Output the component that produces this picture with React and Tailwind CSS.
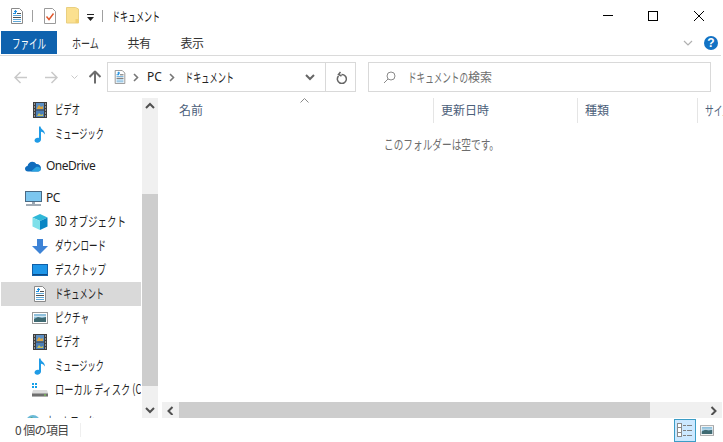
const FONT = '"Noto Sans CJK JP", "Noto Sans", sans-serif';

/* Condensed kana: the string is squeezed to the given width, computed from its natural width */
function Squeeze({ text, width, natural, className = '' }) {
  const nat = (natural || text.length * 12) * (13 / 12);
  return (
    <span className={`inline-block shrink-0 whitespace-nowrap text-[13px] ${className}`} style={{ width }}>
      <span className="inline-block origin-left" style={{ transform: `scaleX(${width / nat})` }}>{text}</span>
    </span>
  );
}

function DocIcon({ size = 16 }) {
  return (
    <svg width={size} height={size} viewBox="0 0 16 16" className="shrink-0">
      <path d="M2.500 .500h8l3 3v12h-11z" fill="#fff" stroke="#8a8a8a" />
      <path d="M6.500 2v3M5 3.500h3M4 5.500h3" stroke="#1f8fe0" strokeWidth="1.200" />
      <path d="M4 7.500h8M4 11.500h8M4 13.500h8" stroke="#5fa8d8" />
      <path d="M8 5.500h4M4 9.500h8" stroke="#4f4f4f" />
    </svg>
  );
}
function ChecklistIcon() {
  return (
    <svg width="14" height="16" viewBox="0 0 14 16" className="shrink-0">
      <path d="M1.500 .500h8l3 3v12h-11z" fill="#fff" stroke="#9a9a9a" />
      <path d="M3.500 8.500l2.500 3 4.500-6" fill="none" stroke="#e0562b" strokeWidth="1.400" />
    </svg>
  );
}
function FolderIcon() {
  return (
    <svg width="13" height="17" viewBox="0 0 13 17" className="shrink-0">
      <path d="M.500 .500h9l3 1.500v14h-12z" fill="#fbe08f" stroke="#e9cf80" />
      <path d="M9.500 12h3v4h-3z" fill="#f1cf70" />
    </svg>
  );
}
function VideoIcon() {
  return (
    <svg width="14" height="16" viewBox="0 0 14 16" className="shrink-0">
      <rect width="14" height="16" fill="#3e3e3e" />
      <rect x="3" y="1" width="8" height="6.500" fill="#5b8fc4" />
      <rect x="3" y="8.500" width="8" height="6.500" fill="#4b7fb8" />
      <path d="M4 6l2-3 2 2 2-1v3H4z" fill="#d9a441" />
      <path d="M4 14l2-3 2 2 2-1v2H4z" fill="#c9c15a" />
      <path d="M1 2h1M1 5h1M1 8h1M1 11h1M1 14h1M12 2h1M12 5h1M12 8h1M12 11h1M12 14h1" stroke="#eee" />
    </svg>
  );
}
function MusicIcon() {
  return (
    <svg width="12" height="17" viewBox="0 0 12 17" className="shrink-0">
      <path d="M5 .500h1.500c.3 3 4.500 3.500 4.500 8-1-1.700-2.500-2.600-4-2.800V13.500c0 2-1.800 3.200-3.700 3.200C1.500 16.700.500 15.700.500 14.500c0-1.600 1.700-2.800 3.300-2.800.5 0 .9.100 1.200.200z" fill="#1f9be6" />
    </svg>
  );
}
function CloudIcon() {
  return (
    <svg width="16" height="11" viewBox="0 0 16 11" className="shrink-0">
      <path d="M3 10.500C1.200 10.500 0 9.300 0 7.800c0-1.400 1-2.500 2.500-2.700C3 2.500 5 .800 7.300.800c1.700 0 3.100.900 3.900 2.200 2.500-.3 4.800 1.600 4.800 4.300 0 1.700-1.300 3.200-3 3.200z" fill="#0f6cbd" />
      <path d="M6 10.500l5-4.500c1.500-.7 3-.5 5 1.500 0 1.700-1.300 3-3 3z" fill="#2aa3e0" />
    </svg>
  );
}
function PcIcon() {
  return (
    <svg width="17" height="15" viewBox="0 0 17 15" className="shrink-0">
      <rect x=".5" y=".5" width="16" height="10" fill="#7cc6ef" stroke="#4a6a85" />
      <path d="M7 11h3v2H7z" fill="#9aa7b3" />
      <path d="M1 14h15" stroke="#8a97a3" strokeWidth="1.600" />
    </svg>
  );
}
function CubeIcon() {
  return (
    <svg width="16" height="16" viewBox="0 0 16 16" className="shrink-0">
      <path d="M8 0l7.500 3.500L8 7 .5 3.500z" fill="#2fb8d8" />
      <path d="M.5 3.500L8 7v9L.5 12.500z" fill="#7fe0ea" />
      <path d="M15.500 3.500L8 7v9l7.500-3.500z" fill="#0a86c4" />
    </svg>
  );
}
function DownIcon() {
  return (
    <svg width="16" height="15" viewBox="0 0 16 15" className="shrink-0">
      <path d="M5 0h6v7h5l-8 8-8-8h5z" fill="#3d83d6" />
    </svg>
  );
}
function DesktopIcon() {
  return (
    <svg width="16" height="12" viewBox="0 0 16 12" className="shrink-0">
      <rect x=".5" y=".5" width="15" height="11" fill="#1e96e8" stroke="#0f5fa8" />
      <path d="M1 10.500h14" stroke="#0b4a87" />
    </svg>
  );
}
function PictureIcon({ size = 16, h = 12 }) {
  return (
    <svg width={size} height={h} viewBox="0 0 16 12" className="shrink-0">
      <rect x=".5" y=".5" width="15" height="11" fill="#fff" stroke="#9a9a9a" />
      <rect x="2" y="2" width="12" height="8" fill="#8fc0dc" />
      <path d="M2 7l4-2 4 1 4-1v5H2z" fill="#3f6a72" />
      <path d="M2 4.500h12" stroke="#cfe4ef" />
    </svg>
  );
}
function DiskIcon() {
  return (
    <svg width="16" height="14" viewBox="0 0 16 14" className="shrink-0">
      <path d="M0 0h2v2H0zM3 0h2v2H3zM0 3h2v2H0zM3 3h2v2H3z" fill="#16a0e8" />
      <path d="M1 7h14l1 3v3.500H0V10z" fill="#dcdcdc" />
      <path d="M0 10.500h16v3H0z" fill="#6f6f6f" />
      <path d="M12 11.500h2v1h-2z" fill="#7fe04f" />
    </svg>
  );
}
function GlobeIcon() {
  return (
    <svg width="16" height="16" viewBox="0 0 16 16" className="shrink-0">
      <circle cx="8" cy="8" r="7" fill="#6bbad8" />
      <path d="M3 5l4-2 2 3-3 3z" fill="#4f9e6b" />
    </svg>
  );
}

function Tree({ icon, label, width, natural, latin, indent, selected }) {
  return (
    <div className={`h-6 flex items-center shrink-0 whitespace-nowrap overflow-hidden ${selected ? 'bg-[#d9d9d9]' : ''}`}>
      <div className={`flex justify-center shrink-0 ${indent ? 'ml-[31px] w-4 mr-[7px]' : 'ml-[24px] w-4 mr-[5px]'}`}>{icon}</div>
      <div className="mb-[2px] text-[12px] leading-[16px] text-[#1f1f1f]">
        {latin ? <span className="tracking-[-0.5px]" style={{ fontFamily: '"Noto Sans", sans-serif' }}>{label}</span> : <Squeeze text={label} width={width} natural={natural} />}
      </div>
    </div>
  );
}

function Chevron({ dir, color = '#505050' }) {
  const d = {
    up: 'M1 6l4-4 4 4',
    down: 'M1 2l4 4 4-4',
    left: 'M6.500 1l-4 4 4 4',
    right: 'M2.500 1l4 4-4 4',
  }[dir];
  return (
    <svg width="10" height="10" viewBox="0 0 10 8" className="shrink-0">
      <path d={d} fill="none" stroke={color} strokeWidth="2" />
    </svg>
  );
}

function Crumb() {
  return (
    <svg width="10" height="9" viewBox="0 0 10 9" className="shrink-0">
      <path d="M3 1l3.500 3.500L3 8" fill="none" stroke="#777" strokeWidth="1.600" />
    </svg>
  );
}

function Arrow({ flip, color, strong }) {
  return (
    <svg width="14" height="13" viewBox="0 0 14 13" className={flip ? 'rotate-180' : ''}>
      <path d="M1 6.500h12M6.500 1L1 6.500 6.500 12" fill="none" stroke={color} strokeWidth={strong ? 2 : 1.500} />
    </svg>
  );
}

function HeaderCol({ label, width, first, squeezed }) {
  return (
    <div className="h-[25px] flex items-center shrink-0 border-r border-[#e5e5e5] overflow-hidden" style={{ width }}>
      <div className={`mb-[2px] text-[12px] leading-[16px] text-[#4c607a] whitespace-nowrap ${first ? 'pl-[19px]' : 'pl-[7px]'}`}>
        {squeezed ? <Squeeze text={label} width={squeezed} /> : label}
      </div>
    </div>
  );
}

export default function App() {
  return (
    <div className="w-[723px] h-[442px] bg-white flex flex-col overflow-hidden" style={{ fontFamily: FONT }}>
      {/* title bar */}
      <div className="h-[31px] flex items-center shrink-0">
        <div className="ml-[9px]"><DocIcon size={16} /></div>
        <div className="w-px h-3 bg-[#a0a0a0] ml-[7px]" />
        <div className="ml-[10px]"><ChecklistIcon /></div>
        <div className="ml-[9px]"><FolderIcon /></div>
        <svg width="8" height="7" viewBox="0 0 8 7" className="ml-[8px] mt-[3px]">
          <path d="M0 0h7v1H0zM0 3h7L3.500 7z" fill="#222" />
        </svg>
        <div className="w-px h-3 bg-[#a0a0a0] ml-[7px]" />
        <div className="ml-[9px] text-[12px] leading-[16px] text-[#111]"><Squeeze text="ドキュメント" width={48} /></div>
        <div className="ml-auto mr-px flex items-center">
          <div className="w-[44px] flex justify-center"><div className="w-[10px] h-px bg-black" /></div>
          <div className="w-[46px] flex justify-center"><div className="w-[10px] h-[10px] border border-black" /></div>
          <div className="w-[46px] flex justify-center">
            <svg width="10" height="10" viewBox="0 0 10 10"><path d="M0 0l10 10M10 0L0 10" stroke="#000" /></svg>
          </div>
        </div>
      </div>

      {/* ribbon tabs */}
      <div className="h-[25px] flex items-start shrink-0 border-b border-[#dadada] mr-[2px]">
        <div className="ml-px w-[56px] h-[23px] bg-[#0f62ae] text-white text-[12px] leading-[16px] flex items-center justify-center"><Squeeze text="ファイル" width={34} /></div>
        <div className="w-[56px] h-[23px] text-[12px] leading-[16px] text-[#333] flex items-center justify-center"><Squeeze text="ホーム" width={27} /></div>
        <div className="w-[52px] h-[23px] text-[12px] text-[#333] tracking-[-0.5px] flex items-center justify-center">共有</div>
        <div className="w-[54px] h-[23px] text-[12px] text-[#333] tracking-[-0.5px] flex items-center justify-center">表示</div>
        <div className="ml-auto mr-[3px] h-[23px] flex items-center gap-[11px]">
          <svg width="10" height="6" viewBox="0 0 10 6"><path d="M1 1l4 4 4-4" fill="none" stroke="#b0b0b0" strokeWidth="1.200" /></svg>
          <div className="w-[14px] h-[14px] rounded-full bg-[#1272c4] text-white text-[12px] font-bold flex items-center justify-center leading-none" style={{ fontFamily: '"Liberation Sans", sans-serif' }}>?</div>
        </div>
      </div>

      {/* address row */}
      <div className="h-[42px] flex items-center shrink-0">
        <div className="ml-[14px] flex items-center"><Arrow color="#c9c9c9" /></div>
        <div className="ml-[16px] flex items-center"><Arrow flip color="#c9c9c9" /></div>
        <svg width="7" height="5" viewBox="0 0 7 5" className="ml-[13px]"><path d="M.5 .5l3 3 3-3" fill="none" stroke="#c9c9c9" /></svg>
        <div className="ml-[10px] rotate-90"><Arrow color="#6d6d6d" strong /></div>
        <div className="ml-[5px] w-[249px] h-[30px] border border-[#d9d9d9] flex items-center">
          <div className="ml-[5px]"><DocIcon size={14} /></div>
          <div className="ml-[4px]"><Crumb /></div>
          <span className="ml-[6px] text-[12px] text-[#222]" style={{ fontFamily: '"Noto Sans", sans-serif' }}>PC</span>
          <div className="ml-[5px]"><Crumb /></div>
          <div className="ml-[8px] text-[12px] leading-[16px] text-[#222]"><Squeeze text="ドキュメント" width={49} /></div>
          <div className="ml-auto w-[30px] h-full flex items-center justify-center">
            <Chevron dir="down" color="#666" />
          </div>
          <div className="w-[30px] h-full border-l border-[#d9d9d9] flex items-center justify-center">
            <svg width="12" height="13" viewBox="0 0 12 13">
              <path d="M3 4.500A4.500 4.500 0 1 0 6 3M5 .5L3 3l3 1.500" fill="none" stroke="#666" strokeWidth="1.500" transform="translate(0.500 0.500)" />
            </svg>
          </div>
        </div>
        <div className="ml-[12px] w-[343px] h-[30px] border border-[#d9d9d9] flex items-center">
          <svg width="13" height="13" viewBox="0 0 13 13" className="ml-[14px]">
            <circle cx="8" cy="5" r="4" fill="none" stroke="#8a8a8a" />
            <path d="M5 8l-4 4" stroke="#8a8a8a" />
          </svg>
          <div className="ml-[12px] text-[12px] leading-[16px] text-[#6d6d6d] flex">
            <Squeeze text="ドキュメントの" width={60} />
            <span>検索</span>
          </div>
        </div>
      </div>

      {/* body */}
      <div className="flex-1 min-h-0 flex">
        <div className="w-[142px] shrink-0 pl-px pr-px overflow-hidden flex flex-col">
          <Tree indent icon={<VideoIcon />} label="ビデオ" width={25} />
          <Tree indent icon={<MusicIcon />} label="ミュージック" width={49} />
          <div className="h-2 shrink-0" />
          <Tree latin icon={<CloudIcon />} label="OneDrive" />
          <div className="h-2 shrink-0" />
          <Tree latin icon={<PcIcon />} label="PC" />
          <Tree indent icon={<CubeIcon />} label="3D オブジェクト" width={69} natural={87} />
          <Tree indent icon={<DownIcon />} label="ダウンロード" width={51} />
          <Tree indent icon={<DesktopIcon />} label="デスクトップ" width={51} />
          <Tree indent selected icon={<DocIcon />} label="ドキュメント" width={49} />
          <Tree indent icon={<PictureIcon />} label="ピクチャ" width={34} />
          <Tree indent icon={<VideoIcon />} label="ビデオ" width={25} />
          <Tree indent icon={<MusicIcon />} label="ミュージック" width={49} />
          <Tree indent icon={<DiskIcon />} label="ローカル ディスク (C:)" width={110} natural={143} />
          <div className="h-2 shrink-0" />
          <Tree indent={false} icon={<GlobeIcon />} label="ネットワーク" width={49} />
        </div>

        {/* vertical scrollbar */}
        <div className="w-[16px] shrink-0 bg-[#f0f0f0] flex flex-col">
          <div className="h-[16px] flex items-center justify-center"><Chevron dir="up" /></div>
          <div className="h-[80px]" />
          <div className="h-[192px] bg-[#cdcdcd]" />
          <div className="flex-1" />
          <div className="h-[16px] flex items-center justify-center"><Chevron dir="down" /></div>
        </div>

        <div className="w-[2px] shrink-0" />

        {/* file list */}
        <div className="flex-1 min-w-0 flex flex-col relative">
          <svg width="9" height="5" viewBox="0 0 9 5" className="absolute left-[140px] top-0">
            <path d="M.5 4.500l4-4 4 4" fill="none" stroke="#8a8a8a" />
          </svg>
          <div className="flex shrink-0 overflow-hidden">
            <HeaderCol first label="名前" width={274} />
            <HeaderCol label="更新日時" width={144} />
            <HeaderCol label="種類" width={120} />
            <HeaderCol label="サイズ" width={60} squeezed={26} />
          </div>
          <div className="flex-1 flex justify-center text-[12px] leading-[16px] text-[#6d6d6d] pt-[13px]">
            <Squeeze text="このフォルダーは空です。" width={116} natural={144} />
          </div>
          <div className="h-[16px] shrink-0 bg-[#f0f0f0] flex ml-[2px] mr-px">
            <div className="w-[17px] flex items-center justify-center"><Chevron dir="left" /></div>
            <div className="w-[471px] bg-[#cdcdcd]" />
            <div className="flex-1" />
            <div className="w-[17px] flex items-center justify-center"><Chevron dir="right" /></div>
          </div>
        </div>
      </div>

      {/* status bar */}
      <div className="h-[24px] shrink-0 flex items-center">
        <div className="ml-[15px] w-[65px] text-[12px] leading-[16px] tracking-[-0.6px] text-[#444] whitespace-nowrap">0 個の項目</div>
        <div className="w-px h-[14px] bg-[#efefef]" />
        <div className="ml-auto mr-[9px] flex items-center gap-[4px]">
          <div className="w-[22px] h-[23px] bg-[#cce8ff] border border-[#3c9dc6] flex items-center justify-center">
            <svg width="16" height="14" viewBox="0 0 16 14">
              <rect x=".5" y=".5" width="4" height="13" fill="#fff" stroke="#8a8a8a" />
              <path d="M6 2.500h3M10 2.500h5M6 7.500h3M10 7.500h5M6 12.500h3M10 12.500h5" stroke="#808080" />
              <path d="M1 4.500h3M1 9.500h3" stroke="#8a8a8a" />
            </svg>
          </div>
          <PictureIcon size={14} h={11} />
        </div>
      </div>
    </div>
  );
}
